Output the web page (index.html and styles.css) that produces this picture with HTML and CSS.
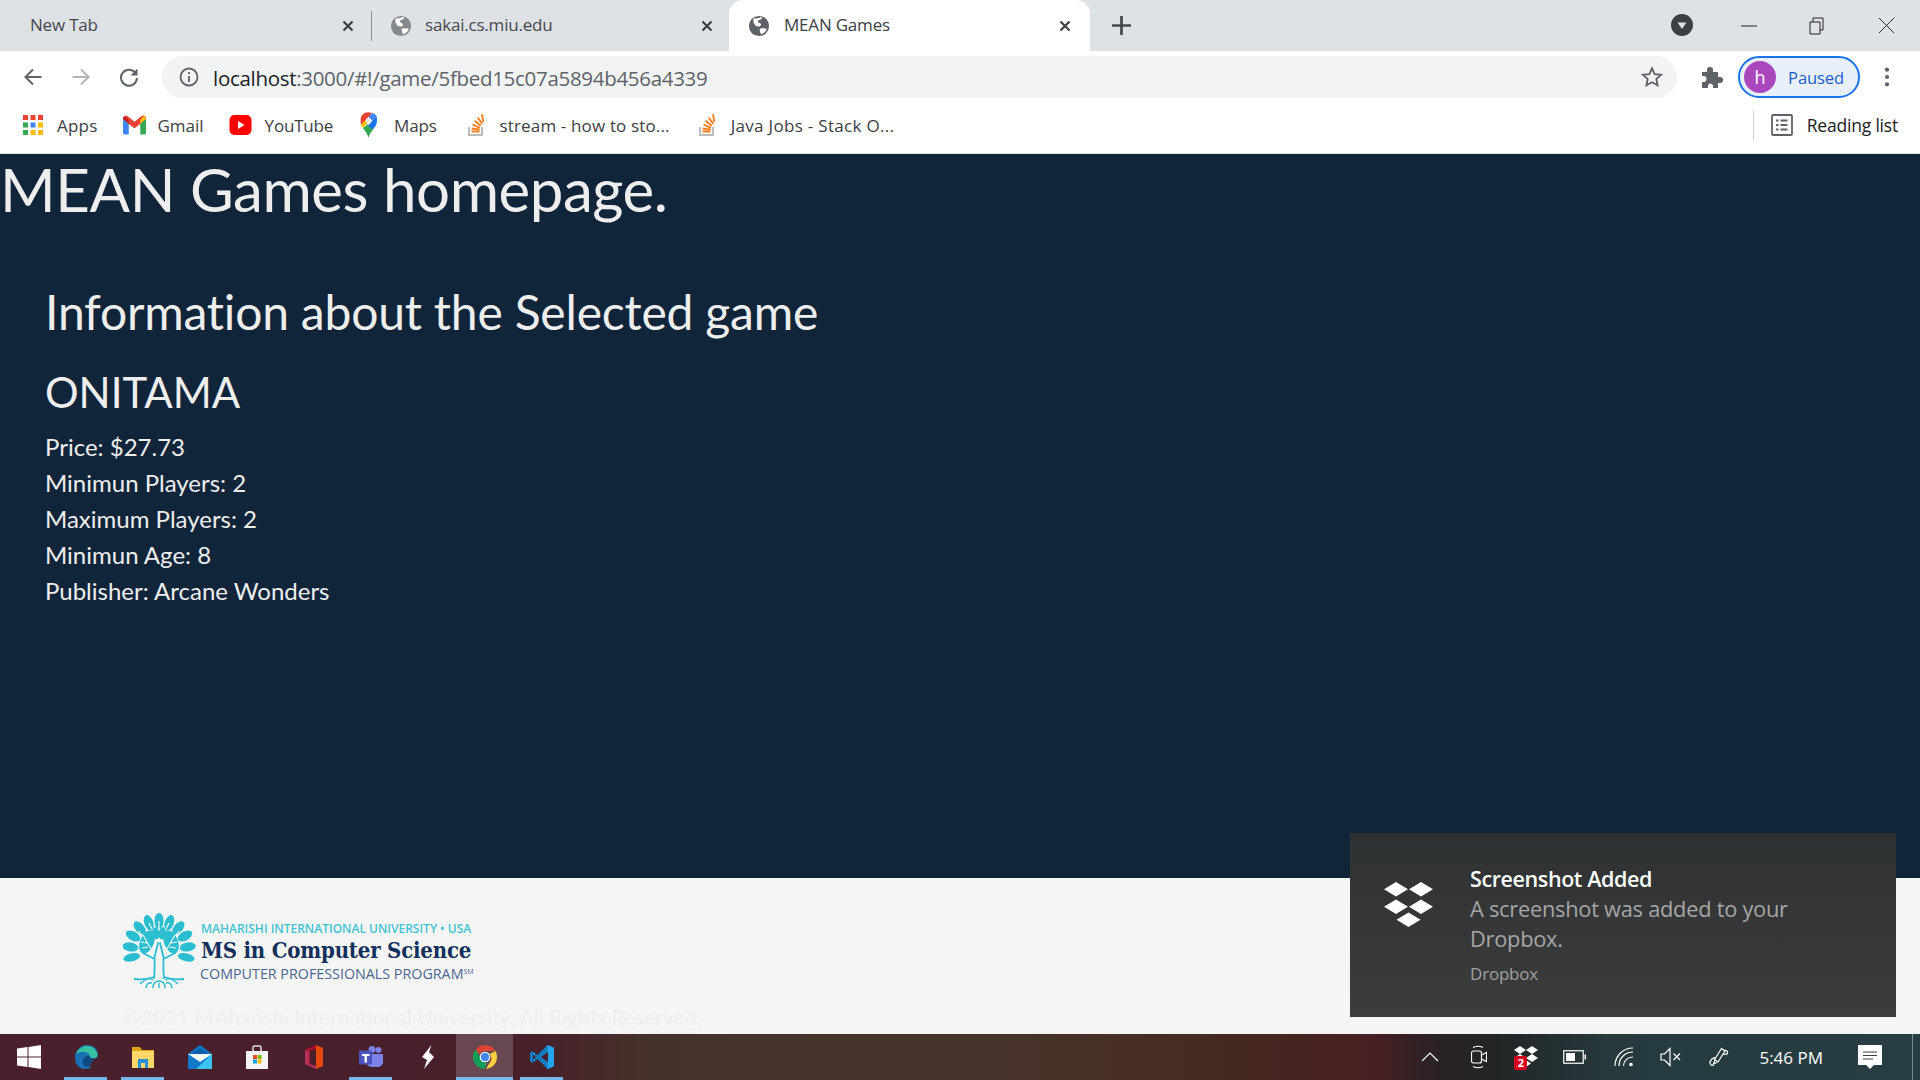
FILE: index.html
```html
<!DOCTYPE html>
<html>

<head>
  <meta charset="UTF-8">
  <meta name="viewport" content="width=device-width, initial-scale=1" />
  <title>MEAN Games</title>
  <link rel="stylesheet" href="styles.css">
</head>

<body>
  <!-- tab strip -->
  <div class="tabs">
    <div class="tab tab-first">
      <span class="tab-title">New Tab</span>
      <svg class="tab-close" viewBox="0 0 12 12"><path d="M1.5 1.5l9 9M10.5 1.5l-9 9" /></svg>
    </div>
    <div class="tab tab-second">
      <svg class="globe globe-dim" viewBox="0 0 24 24"><circle cx="12" cy="12" r="11" /><path class="globe-land" d="M6 3.500c3 .5 6 0 9-1.500 1 2-1 3-3 3.500-2 .5-1 3 1 3.500 2 .5 1.500 3-.5 3.500-3 .5-5-1-6-3.500-1-2-.5-4-.5-5.500zM13 15c3-1 5.500-.5 7.500 0-1 3-3 5-6 6-1.500-2-2-4-1.500-6z" /></svg>
      <span class="tab-title">sakai.cs.miu.edu</span>
      <svg class="tab-close" viewBox="0 0 12 12"><path d="M1.5 1.5l9 9M10.5 1.5l-9 9" /></svg>
    </div>
    <div class="tab tab-active">
      <svg class="globe" viewBox="0 0 24 24"><circle cx="12" cy="12" r="11" /><path class="globe-land" d="M6 3.500c3 .5 6 0 9-1.500 1 2-1 3-3 3.500-2 .5-1 3 1 3.500 2 .5 1.500 3-.5 3.500-3 .5-5-1-6-3.500-1-2-.5-4-.5-5.500zM13 15c3-1 5.500-.5 7.500 0-1 3-3 5-6 6-1.500-2-2-4-1.500-6z" /></svg>
      <span class="tab-title">MEAN Games</span>
      <svg class="tab-close" viewBox="0 0 12 12"><path d="M1.500 1.500l9 9M10.500 1.500l-9 9" /></svg>
    </div>
    <svg class="tab-new" viewBox="0 0 18 18"><path d="M9 0v18M0 9h18" /></svg>
    <div class="window-controls">
      <svg class="tab-search" viewBox="0 0 22 22"><circle cx="11" cy="11" r="11" /><path d="M6.500 8.500h9L11 15z" /></svg>
      <svg class="win-btn win-min" viewBox="0 0 16 16"><path d="M0 8h16" /></svg>
      <svg class="win-btn win-restore" viewBox="0 0 16 18"><path d="M1 5h10v12H1zM4 5V1h10v12h-3" /></svg>
      <svg class="win-btn win-close" viewBox="0 0 18 18"><path d="M1 1l16 16M17 1L1 17" /></svg>
    </div>
  </div>

  <!-- address bar -->
  <div class="toolbar">
    <svg class="nav-icon" viewBox="0 0 20 20"><path d="M18.500 10H3M10 2.500L2.500 10l7.500 7.500" /></svg>
    <svg class="nav-icon nav-off" viewBox="0 0 20 20"><path d="M1.500 10H17M10 2.500l7.500 7.500-7.500 7.500" /></svg>
    <svg class="nav-icon" viewBox="0 0 20 20"><path d="M16.800 6.500A8 8 0 1 0 18 11" /><path class="fill" d="M18.500 1.500v7h-7z" /></svg>
    <div class="omnibox">
      <svg class="info-icon" viewBox="0 0 20 20"><circle cx="10" cy="10" r="8.500" /><path d="M10 9v6M10 5v2" /></svg>
      <span class="url"><span class="url-host">localhost</span>:3000/#!/game/5fbed15c07a5894b456a4339</span>
      <svg class="star-icon" viewBox="0 0 24 24"><path d="M12 2.500l2.900 6.300 6.900.8-5.100 4.700 1.400 6.800-6.100-3.400-6.100 3.400 1.400-6.800L2.200 9.600l6.900-.8z" /></svg>
    </div>
    <svg class="puzzle-icon" viewBox="0 0 24 24"><path d="M3 7h5V5a3 3 0 0 1 6 0v2h5v5h2a3 3 0 0 1 0 6h-2v5h-5v-2a2.500 2.500 0 0 0-5 0v2H3v-6h1.500a3 3 0 0 0 0-6H3z" /></svg>
    <div class="profile">
      <span class="avatar">h</span>
      <span class="profile-label">Paused</span>
    </div>
    <svg class="menu-icon" viewBox="0 0 6 24"><circle cx="3" cy="4" r="2.300" /><circle cx="3" cy="12" r="2.300" /><circle cx="3" cy="20" r="2.300" /></svg>
  </div>

  <!-- bookmarks -->
  <div class="bookmarks">
    <div class="bookmark bm-apps">
      <svg class="bm-icon" viewBox="0 0 20 20">
        <rect x="0" y="0" width="5" height="5" fill="#ea4335" /><rect x="7.500" y="0" width="5" height="5" fill="#ea4335" /><rect x="15" y="0" width="5" height="5" fill="#ea4335" />
        <rect x="0" y="7.500" width="5" height="5" fill="#34a853" /><rect x="7.500" y="7.500" width="5" height="5" fill="#4285f4" /><rect x="15" y="7.500" width="5" height="5" fill="#fbbc04" />
        <rect x="0" y="15" width="5" height="5" fill="#34a853" /><rect x="7.500" y="15" width="5" height="5" fill="#fbbc04" /><rect x="15" y="15" width="5" height="5" fill="#fbbc04" />
      </svg>
      <span>Apps</span>
    </div>
    <div class="bookmark bm-gmail">
      <svg class="bm-icon bm-wide" viewBox="0 0 24 20">
        <path fill="#4285f4" d="M0 3v15a2 2 0 0 0 2 2h4V9z" />
        <path fill="#34a853" d="M24 3v15a2 2 0 0 1-2 2h-4V9z" />
        <path fill="#ea4335" d="M0 3.500C0 .5 3-.8 5 .8L12 6.500 19 .8c2-1.600 5-.3 5 2.700L18 9l-6 4.500L6 9z" />
        <path fill="#c5221f" d="M0 3.500L6 9V5L3.600 2.300C2 .5 0 1.500 0 3.500z" />
        <path fill="#fbbc04" d="M18 5l2.500-3.500C22 .5 24 1.500 24 3.500L18 9z" />
      </svg>
      <span>Gmail</span>
    </div>
    <div class="bookmark bm-youtube">
      <svg class="bm-icon bm-wide" viewBox="0 0 22 20"><rect width="22" height="20" rx="5" fill="#f00" /><path fill="#fff" d="M8.500 6l6.500 4-6.500 4z" /></svg>
      <span>YouTube</span>
    </div>
    <div class="bookmark bm-maps">
      <svg class="bm-map" viewBox="0 0 17 26">
        <path fill="#34a853" d="M3 16c2 3 4.500 5.500 5.500 10 1-4.500 3-6 4.500-8.500L8 12z" />
        <path fill="#fbbc04" d="M1 12.500c.5 1.300 1.200 2.400 2 3.500l6-7-4-4z" />
        <path fill="#1a73e8" d="M16.500 4L8 14l5 3.500c2-2.500 4-5 4-9 0-1.700-.1-3.200-.5-4.500z" />
        <path fill="#ea4335" d="M12 1C8 -.5 3 .5 1 5c-.5 2.500-.5 5 0 7.500L8.500 5z" />
        <path fill="#4285f4" d="M12 1l-3.500 4 4 4 4-5c-.8-1.300-2.500-2.500-4.500-3z" />
        <circle cx="8.500" cy="8.500" r="2.700" fill="#e8eaed" />
      </svg>
      <span>Maps</span>
    </div>
    <div class="bookmark bm-stream">
      <svg class="bm-so" viewBox="0 0 17 22">
        <path fill="#bcbbbb" d="M0 13h2v7h11v-7h2v9H0z" />
        <path fill="#f48024" d="M3.500 16.500h8v2h-8zM3.800 13.500l7.900 1.200-.3 1.900-7.900-1.200zM5 9.800l7.300 3.100-.8 1.800-7.300-3.100zM7.200 6l6.200 5-1.200 1.500-6.200-5zM10.500 3l4.600 6.400-1.600 1.200-4.600-6.500zM15 0l1.200 7.800-1.900.3-1.200-7.900z" />
      </svg>
      <span>stream - how to sto...</span>
    </div>
    <div class="bookmark bm-java">
      <svg class="bm-so" viewBox="0 0 17 22">
        <path fill="#bcbbbb" d="M0 13h2v7h11v-7h2v9H0z" />
        <path fill="#f48024" d="M3.500 16.500h8v2h-8zM3.800 13.500l7.900 1.200-.3 1.900-7.900-1.200zM5 9.800l7.300 3.100-.8 1.800-7.300-3.100zM7.200 6l6.200 5-1.200 1.500-6.200-5zM10.500 3l4.600 6.400-1.600 1.200-4.600-6.500zM15 0l1.200 7.800-1.900.3-1.200-7.900z" />
      </svg>
      <span>Java Jobs - Stack O...</span>
    </div>
    <div class="reading-list">
      <svg class="reading-icon" viewBox="0 0 22 22"><rect x="1" y="1" width="20" height="20" rx="1" /><path d="M9.500 6.500h7M9.500 11h7M9.500 15.500h7M5 6.500h2.500M5 11h2.500M5 15.500h2.500" /></svg>
      <span>Reading list</span>
    </div>
  </div>

  <!-- page -->
  <div class="page">
    <main class="content">
      <h1 class="page-title">MEAN Games homepage.</h1>
      <section class="game">
        <h2 class="game-heading">Information about the Selected game</h2>
        <h3 class="game-name">ONITAMA</h3>
        <ul class="game-info">
          <li>Price: $27.73</li>
          <li>Minimun Players: 2</li>
          <li>Maximum Players: 2</li>
          <li>Minimun Age: 8</li>
          <li>Publisher: Arcane Wonders</li>
        </ul>
      </section>
    </main>

    <footer class="footer">
      <div class="logo">
        <svg class="logo-tree" viewBox="0 0 73 76">
          <g class="tree-leaves">
            <ellipse cx="36" cy="8" rx="4.500" ry="8" />
            <ellipse cx="36" cy="8" rx="4.500" ry="8" transform="rotate(20 36 38)" />
            <ellipse cx="36" cy="8" rx="4.500" ry="8" transform="rotate(-20 36 38)" />
            <ellipse cx="36" cy="8" rx="4.500" ry="8" transform="rotate(40 36 38)" />
            <ellipse cx="36" cy="8" rx="4.500" ry="8" transform="rotate(-40 36 38)" />
            <ellipse cx="36" cy="8" rx="4.500" ry="8" transform="rotate(60 36 38)" />
            <ellipse cx="36" cy="8" rx="4.500" ry="8" transform="rotate(-60 36 38)" />
            <ellipse cx="36" cy="9" rx="4.500" ry="8" transform="rotate(82 36 38)" />
            <ellipse cx="36" cy="9" rx="4.500" ry="8" transform="rotate(-82 36 38)" />
            <ellipse cx="36" cy="10" rx="4" ry="8.500" transform="rotate(103 36 38)" />
            <ellipse cx="36" cy="10" rx="4" ry="8.500" transform="rotate(-103 36 38)" />
            <ellipse cx="36" cy="20" rx="3.500" ry="6" transform="rotate(10 36 38)" />
            <ellipse cx="36" cy="20" rx="3.500" ry="6" transform="rotate(-10 36 38)" />
            <ellipse cx="24" cy="29" rx="7" ry="12" transform="rotate(22 24 29)" />
            <ellipse cx="48" cy="29" rx="7" ry="12" transform="rotate(-22 48 29)" />
          </g>
          <path class="tree-veins" d="M20 22l8 14M52 22l-8 14M18 29l6 1M19 35l6-1M54 29l-6 1M53 35l-6-1M36 8v8M26 10l3 6M46 10l-3 6M15 18l4 4M57 18l-4 4" />
          <path class="tree-trunk" d="M31.500 44c0 7 .5 14-.5 21M40.500 44c0 7-.5 14 .5 21M31.500 46L20 40M40.500 46L52 40M31.500 44L35 30M40.500 44L37 30" />
          <path class="tree-roots" d="M11 66c8 1 14 0 20-2M61 66c-8 1-14 0-20-2" />
          <path class="tree-roots-fine" d="M17 71c5-5 10-6 13-4M55 71c-5-5-10-6-13-4M23 75c0-4 3-6 6-5M49 75c0-4-3-6-6-5M30 75c0-5 3-7 6-7s6 2 6 7M36 70v5" />
        </svg>
        <div class="logo-text">
          <div class="logo-uni">MAHARISHI INTERNATIONAL UNIVERSITY • USA</div>
          <div class="logo-ms">MS in Computer Science</div>
          <div class="logo-cpp">COMPUTER PROFESSIONALS PROGRAM<sup>SM</sup></div>
        </div>
      </div>
      <p class="copyright">©2021 MAharishi International University. All Rights Reserved.</p>
    </footer>
  </div>

  <!-- windows taskbar -->
  <div class="taskbar">
    <div class="task">
      <svg class="task-icon" viewBox="0 0 24 24"><path fill="#fff" d="M0 3.500l10.500-1.400V11.500H0zM11.500 2L24 0v11.500H11.500zM0 12.500h10.500v9.400L0 20.500zM11.500 12.500H24V24l-12.500-2z" /></svg>
    </div>
    <div class="task task-open">
      <svg class="task-icon" viewBox="0 0 24 24">
        <path fill="#1b6fb3" d="M1 13C1 6 6 0 13 0c6 0 11 4 11 10 0 3-3 4-6 4H9c0 5 4 8 9 7.500-1.500 1.700-4 2.500-7 2.500-6 0-10-5-10-11z" />
        <path fill="#35c1a1" d="M2 9C4 4 8 1 13 1c5 0 10 3 10.500 9 .2 2-2 3.500-5 3.500-3 0-2-3-4-5S5 6 2 9z" />
        <path fill="#0c4a80" d="M9 15c1-3 3-4 5-4 1 0 2 .5 2 2h4c-1 5-4 8-8 9-2-1-4-4-3-7z" />
      </svg>
    </div>
    <div class="task task-open">
      <svg class="task-icon" viewBox="0 0 24 24">
        <path fill="#e0a514" d="M1 2h8l2 3h12v4H1z" />
        <path fill="#ffd768" d="M1 6h22v17H1z" />
        <path fill="#2a8fd8" d="M7 14h10v9h-3v-5h-4v5H7z" />
      </svg>
    </div>
    <div class="task">
      <svg class="task-icon" viewBox="0 0 24 24">
        <path fill="#0f78c8" d="M0 9L12 0l12 9v15H0z" />
        <path fill="#3cc4f5" d="M24 9v15H8z" />
        <path fill="#fff" d="M0 9h24L12 17z" opacity=".95" />
        <path fill="#0f62a8" d="M3 9l9-6.500L21 9z" />
      </svg>
    </div>
    <div class="task">
      <svg class="task-icon" viewBox="0 0 24 24">
        <path fill="none" stroke="#ddd" stroke-width="1.500" d="M8 6V2.500A1.500 1.500 0 0 1 9.500 1h5A1.500 1.500 0 0 1 16 2.500V6" />
        <path fill="#f5f5f5" d="M1 6h22v18H1z" />
        <rect x="8" y="10" width="4" height="4" fill="#f25022" /><rect x="12.500" y="10" width="4" height="4" fill="#7fba00" />
        <rect x="8" y="14.500" width="4" height="4" fill="#00a4ef" /><rect x="12.500" y="14.500" width="4" height="4" fill="#ffb900" />
      </svg>
    </div>
    <div class="task">
      <svg class="task-icon task-office" viewBox="0 0 18 24">
        <path fill="#e64a0a" d="M18 3v18l-7 3V0z" />
        <path fill="#a3142a" d="M11 0L1 4v15l4 1V6l6-2z" />
        <path fill="#b8305a" d="M0 5v14l11 5v-3l-7-2V6z" />
      </svg>
    </div>
    <div class="task task-open">
      <svg class="task-icon" viewBox="0 0 24 24">
        <circle cx="19.500" cy="5" r="3" fill="#7b83eb" />
        <circle cx="13" cy="4.500" r="3.500" fill="#7b83eb" />
        <path fill="#7b83eb" d="M7 9h17v8a5 5 0 0 1-5 5h-6a6 6 0 0 1-6-6z" />
        <rect y="5.500" width="13" height="14" rx="1" fill="#4b53bc" />
        <path fill="#fff" d="M3 9h7.500v2H8v6.500H5.500V11H3z" />
      </svg>
    </div>
    <div class="task">
      <svg class="task-icon task-bolt" viewBox="0 0 12 24"><path fill="#fff" d="M9.500 0L7 7l5 5-10 12 3-9-5-3z" /></svg>
    </div>
    <div class="task task-open task-active">
      <svg class="task-icon" viewBox="0 0 24 24">
        <path fill="#db4437" d="M12 0a12 12 0 0 1 10.400 6H12a6 6 0 0 0-5.500 3.600L2.700 4.400A12 12 0 0 1 12 0z" />
        <path fill="#ffcd40" d="M22.400 6A12 12 0 0 1 12.900 24l4.300-7A6 6 0 0 0 16.700 9z" />
        <path fill="#0f9d58" d="M2.700 4.400l4.600 7.900A6 6 0 0 0 14 17.700L11.500 24A12 12 0 0 1 2.700 4.400z" />
        <circle cx="12" cy="12" r="5.300" fill="#fff" />
        <circle cx="12" cy="12" r="4.200" fill="#4285f4" />
      </svg>
    </div>
    <div class="task task-open">
      <svg class="task-icon" viewBox="0 0 24 24">
        <path fill="#0e7ac0" d="M17.500 0L7.500 10 2.700 6.200 0 7.500v9l2.700 1.300 4.800-3.800 10 10 6.500-2.700V2.700z" />
        <path fill="#23a5ec" d="M17.500 0L24 2.700v18.600L17.500 24z" />
        <path fill="#4a1f2b" d="M18 7l-7 5 7 5z" />
        <path fill="#4a1f2b" d="M3 9.500v5l3-2.500z" />
      </svg>
    </div>

    <div class="tray">
      <svg class="tray-icon tray-chevron" viewBox="0 0 18 10"><path d="M1 9l8-8 8 8" /></svg>
      <svg class="tray-icon tray-meet" viewBox="0 0 16 24">
        <rect x=".5" y="6" width="10" height="12" rx="2" />
        <path d="M10.500 10l5-2.500v9l-5-2.500M2 2.500c3-1.500 7-1.500 10 0M2 21.500c3 1.500 7 1.500 10 0" />
      </svg>
      <div class="tray-dropbox">
        <svg class="tray-dropbox-icon" viewBox="0 0 24 22"><path fill="#fff" d="M6 0l6 4-6 4-6-4zM18 0l6 4-6 4-6-4zM6 8l6 4-6 4-6-4zM18 8l6 4-6 4-6-4zM12 14l5 3.500-5 3.500-5-3.500z" /></svg>
        <span class="tray-badge">2</span>
      </div>
      <svg class="tray-icon tray-battery" viewBox="0 0 23 14"><rect x=".75" y=".75" width="19.500" height="12.500" /><path class="fill" d="M3 3h9v8H3zM21.500 4.500H23v5h-1.500z" /></svg>
      <svg class="tray-icon tray-wifi" viewBox="0 0 20 20"><path d="M1 19C1 9 9 1 19 1M5 19c0-8 6-14 14-14M9.500 19c0-5 4-9 9.500-9" /><circle class="fill" cx="17" cy="17.500" r="1.800" /></svg>
      <svg class="tray-icon tray-volume" viewBox="0 0 21 20"><path d="M1 7h3.500L10 1.500v17L4.500 13H1zM13.500 6.500l6.500 6.500M20 6.500L13.500 13" /></svg>
      <svg class="tray-icon tray-pen" viewBox="0 0 20 20"><path d="M12.500 1.500l3.500 2.500-7 11-3.500-2.500zM6 13l-1.500 4 3.500-1.500M15 3c2 0 4 1 3.500 3-.5 1.500-3 1.500-4.500 1M7 11c-3-1-6 2-6 5 0 2 2 3 4 2" /></svg>
      <span class="tray-clock">5:46 PM</span>
      <svg class="tray-notes" viewBox="0 0 24 24"><path fill="#fff" d="M0 0h24v20h-8l-4 4-4-4H0z" /><path stroke="#3a3f42" stroke-width="1.200" d="M5 7h14M5 10.500h14M5 14h10" /></svg>
      <span class="tray-desktop"></span>
    </div>
  </div>

  <!-- dropbox toast -->
  <div class="toast">
    <svg class="toast-icon" viewBox="0 0 49 50" preserveAspectRatio="none"><path fill="#fff" d="M12 0l12 8-12 8-12-8zM37 0l12 8-12 8-12-8zM12 19.500l12 8-12 8-12-8zM37 19.500l12 8-12 8-12-8zM24.500 34l12 8-12 8-12-8z" /></svg>
    <div class="toast-text">
      <div class="toast-title">Screenshot Added</div>
      <div class="toast-body">A screenshot was added to your Dropbox.</div>
      <div class="toast-source">Dropbox</div>
    </div>
  </div>
</body>

</html>
```
FILE: styles.css
```css
:root {
  --color-strip: #dee1e6;
  --color-page: #10253a;
  --color-footer: #f5f5f5;
  --color-icon: #5f6368;
  --ui-font: "Open Sans", "Noto Sans", sans-serif;
}

* {
  margin: 0;
  padding: 0;
  box-sizing: border-box;
}

html,
body {
  height: 1080px;
  overflow: hidden;
}

body {
  position: relative;
  display: flex;
  flex-direction: column;
  font-family: var(--ui-font);
  color: #3c4043;
  background: #fff;
}

svg {
  display: block;
  flex-shrink: 0;
}

/* tab strip */
.tabs {
  height: 51px;
  flex-shrink: 0;
  display: flex;
  align-items: center;
  background: var(--color-strip);
}

.tab {
  height: 51px;
  display: flex;
  align-items: center;
  font-size: 17px;
  letter-spacing: -.2px;
  color: #45484d;
}

.tab-first {
  position: relative;
  width: 372px;
  padding: 0 18px 0 30px;
}

.tab-first::after {
  content: "";
  position: absolute;
  right: 0;
  top: 11px;
  height: 30px;
  width: 1px;
  background: #8d8f93;
}

.tab-second {
  width: 357px;
  padding: 0 16px 0 18px;
}

.tab-second .globe {
  margin-right: 13px;
}

.tab-active {
  width: 361px;
  padding: 0 19px 0 19px;
  background: #fff;
  border-radius: 14px 14px 0 0;
  color: #3c4043;
}

.tab-title {
  flex: 1;
  padding-bottom: 2px;
  white-space: nowrap;
}

.globe {
  width: 22px;
  height: 22px;
  margin-right: 14px;
  fill: #5f6368;
}

.globe-dim {
  fill: #85888d;
}

.globe-land {
  fill: #fff;
}

.tab-close {
  width: 12px;
  height: 12px;
  fill: none;
  stroke: #3c4043;
  stroke-width: 2.200;
}

.tab-new {
  width: 19px;
  height: 19px;
  margin-left: 22px;
  margin-bottom: 1px;
  fill: none;
  stroke: #45484d;
  stroke-width: 2.600;
}

.window-controls {
  margin-left: auto;
  display: flex;
  align-items: center;
}

.tab-search {
  width: 22px;
  height: 22px;
  margin-right: 48px;
  margin-bottom: 2px;
  fill: #3c4043;
}

.tab-search path {
  fill: #dee1e6;
}

.win-btn {
  fill: none;
  stroke: #222;
  stroke-width: 1;
}

.win-min {
  width: 16px;
  height: 16px;
  margin-right: 52px;
}

.win-restore {
  width: 16px;
  height: 18px;
  margin-right: 53px;
}

.win-close {
  width: 17px;
  height: 17px;
  margin-right: 25px;
}

/* address bar */
.toolbar {
  height: 51px;
  flex-shrink: 0;
  display: flex;
  align-items: center;
  padding: 0 30px 0 23px;
  background: #fff;
}

.nav-icon {
  width: 20px;
  height: 20px;
  margin-right: 28px;
  fill: none;
  stroke: #5f6368;
  stroke-width: 2;
}

.nav-icon:nth-child(3) {
  margin-right: 23px;
}

.nav-icon .fill {
  fill: #5f6368;
  stroke: none;
}

.nav-off {
  stroke: #b4b6b9;
}

.omnibox {
  width: 1516px;
  height: 42px;
  display: flex;
  align-items: center;
  padding: 0 14px 0 17px;
  border-radius: 21px;
  background: #f1f3f4;
}

.info-icon {
  width: 20px;
  height: 20px;
  margin-right: 14px;
  fill: none;
  stroke: #5f6368;
  stroke-width: 1.800;
}

.url {
  flex: 1;
  padding-top: 3px;
  font-size: 20.500px;
  letter-spacing: -.3px;
  color: #5f6368;
  white-space: nowrap;
}

.url-host {
  color: #202124;
}

.star-icon {
  width: 22px;
  height: 22px;
  fill: none;
  stroke: #5f6368;
  stroke-width: 2;
}

.puzzle-icon {
  width: 24px;
  height: 24px;
  margin-left: 22px;
  fill: #5f6368;
}

.profile {
  width: 122px;
  height: 42px;
  margin-left: 15px;
  display: flex;
  align-items: center;
  padding-left: 4px;
  border: 2px solid #1a73e8;
  border-radius: 21px;
  background: #e9f0fb;
}

.avatar {
  width: 32px;
  height: 32px;
  margin-right: 12px;
  display: flex;
  align-items: center;
  justify-content: center;
  border-radius: 50%;
  background: #ab47bc;
  color: #fff;
  font-size: 18px;
}

.profile-label {
  padding-top: 2px;
  font-size: 16.500px;
  letter-spacing: -.1px;
  color: #1a5fc8;
}

.menu-icon {
  width: 6px;
  height: 22px;
  margin-left: 24px;
  fill: #5f6368;
}

/* bookmarks */
.bookmarks {
  height: 51px;
  flex-shrink: 0;
  display: flex;
  align-items: center;
  padding: 0 22px 5px 23px;
  background: #fff;
  font-size: 17px;
  letter-spacing: -.2px;
  color: #3c4043;
}

.bookmark {
  display: flex;
  align-items: center;
  gap: 13px;
  white-space: nowrap;
}

.bm-apps {
  gap: 14px;
  margin-right: 26px;
  letter-spacing: .2px;
}

.bm-icon {
  width: 20px;
  height: 20px;
}

.bm-wide {
  width: 23px;
}

.bm-gmail {
  gap: 11px;
  margin-right: 25px;
  letter-spacing: 0;
}

.bm-youtube {
  margin-right: 27px;
}

.bm-map {
  width: 17px;
  height: 26px;
}

.bm-maps {
  gap: 17px;
  margin-right: 31px;
}

.bm-so {
  width: 17px;
  height: 22px;
}

.bm-stream {
  gap: 15px;
  margin-right: 29px;
  letter-spacing: .15px;
}

.bm-java {
  gap: 15px;
  letter-spacing: .3px;
}

.reading-list {
  margin-left: auto;
  height: 30px;
  display: flex;
  align-items: center;
  gap: 14px;
  padding-left: 17px;
  border-left: 1px solid #d0d2d5;
  font-size: 17.500px;
  color: #202124;
}

.reading-icon {
  width: 22px;
  height: 22px;
  fill: none;
  stroke: #5f6368;
  stroke-width: 1.800;
}

/* page */
.page {
  flex: 1;
  display: flex;
  flex-direction: column;
  font-family: Lato, sans-serif;
}

.content {
  flex: 1;
  background: var(--color-page);
  color: #eeeeee;
  border-top: 1px solid #dfe1e5;
}

.page-title {
  font-size: 60px;
  font-weight: 400;
  letter-spacing: -.45px;
  line-height: 71px;
}

.game {
  padding: 58px 45px 0;
}

.game-heading {
  font-size: 48px;
  font-weight: 400;
  letter-spacing: -.2px;
  line-height: 58px;
  margin-bottom: 27px;
}

.game-name {
  font-size: 42px;
  font-weight: 400;
  line-height: 48px;
  margin-bottom: 13px;
}

.game-info {
  list-style: none;
  font-size: 24px;
  line-height: 36px;
}

.footer {
  height: 156px;
  flex-shrink: 0;
  background: var(--color-footer);
  padding: 35px 123px 0;
}

.logo {
  display: flex;
  align-items: center;
  gap: 5px;
}

.logo-tree {
  width: 73px;
  height: 76px;
}

.tree-leaves {
  fill: #2bbdd0;
}

.tree-veins {
  fill: none;
  stroke: #f5f5f5;
  stroke-width: 1.200;
}

.tree-trunk,
.tree-roots,
.tree-roots-fine {
  fill: none;
  stroke: #2bbdd0;
  stroke-width: 1.800;
}

.tree-trunk {
  stroke-linecap: round;
}

.tree-roots-fine {
  stroke-width: 1.400;
}

.logo-text {
  margin-top: 2px;
  white-space: nowrap;
}

.logo-uni {
  font-family: "Open Sans", sans-serif;
  font-size: 12px;
  font-weight: 600;
  color: #43c3d2;
  line-height: 15px;
}

.logo-ms {
  font-family: "DejaVu Serif", serif;
  font-size: 22px;
  font-weight: 700;
  font-stretch: condensed;
  letter-spacing: -.2px;
  color: #13305c;
  line-height: 28px;
}

.logo-cpp {
  font-family: "Open Sans", sans-serif;
  font-size: 14.300px;
  color: #4d6590;
  line-height: 20px;
  margin-left: -1px;
}

.logo-cpp sup {
  font-size: 7px;
  vertical-align: 5px;
  line-height: 0;
}

.copyright {
  margin-top: 15px;
  font-size: 21px;
  line-height: 26px;
  color: #eeeeee;
}

/* windows taskbar */
.taskbar {
  height: 46px;
  flex-shrink: 0;
  display: flex;
  align-items: stretch;
  color: #fff;
  background: linear-gradient(90deg, #4a202c 0%, #47202a 28%, #45322a 34%, #47342a 52%, #45281f 65%, #461f22 71.500%, #2a2226 75%, #222526 78%, #263a3e 84%, #273e44 100%);
}

.task {
  position: relative;
  width: 57px;
  display: flex;
  align-items: center;
  justify-content: center;
}

.task-open::after {
  content: "";
  position: absolute;
  left: 7px;
  right: 7px;
  bottom: 0;
  height: 3px;
  background: #76b9ed;
}

.task-active {
  background: rgba(255, 255, 255, .18);
}

.task-active::after {
  left: 0;
  right: 0;
}

.task-icon {
  width: 24px;
  height: 24px;
}

.task-office {
  width: 18px;
}

.task-bolt {
  width: 12px;
}

.tray {
  flex: 1;
  display: flex;
  align-items: center;
  justify-content: flex-end;
}

.tray-icon {
  fill: none;
  stroke: #fff;
  stroke-width: 1.200;
}

.tray-icon .fill {
  fill: #fff;
  stroke: none;
}

.tray-chevron {
  width: 18px;
  height: 10px;
  margin-right: 32px;
}

.tray-meet {
  width: 16px;
  height: 24px;
  margin-right: 27px;
}

.tray-dropbox {
  position: relative;
  width: 24px;
  height: 22px;
  margin-right: 25px;
}

.tray-dropbox-icon {
  width: 24px;
  height: 22px;
}

.tray-badge {
  position: absolute;
  left: 0;
  top: 10px;
  width: 13px;
  height: 14px;
  border-radius: 2px;
  background: #d8001f;
  font-size: 11px;
  font-weight: 700;
  line-height: 14px;
  text-align: center;
}

.tray-battery {
  width: 23px;
  height: 14px;
  margin-right: 28px;
}

.tray-wifi {
  width: 20px;
  height: 20px;
  margin-right: 26px;
}

.tray-volume {
  width: 21px;
  height: 20px;
  margin-right: 28px;
}

.tray-pen {
  width: 20px;
  height: 20px;
  margin-right: 30px;
}

.tray-clock {
  font-size: 17px;
  margin-right: 35px;
  white-space: nowrap;
}

.tray-notes {
  width: 24px;
  height: 24px;
  margin-right: 30px;
}

.tray-desktop {
  width: 1px;
  height: 46px;
  margin-right: 7px;
  background: #7d8a8e;
}

/* dropbox toast */
.toast {
  position: absolute;
  left: 1350px;
  top: 833px;
  width: 546px;
  height: 184px;
  display: flex;
  padding: 32px 0 0 34px;
  background: linear-gradient(180deg, #2e3133, #3c3c3c);
  font-family: "Open Sans", sans-serif;
}

.toast-icon {
  width: 49px;
  height: 45px;
  margin-top: 17px;
  margin-right: 37px;
}

.toast-text {
  width: 350px;
}

.toast-title {
  font-size: 21.500px;
  font-weight: 600;
  letter-spacing: -.4px;
  line-height: 28px;
  color: #fff;
}

.toast-body {
  margin-top: 1px;
  font-size: 21.800px;
  letter-spacing: -.25px;
  line-height: 30px;
  color: #a6a6a6;
}

.toast-source {
  margin-top: 7px;
  font-size: 17px;
  letter-spacing: -.2px;
  line-height: 26px;
  color: #a0a0a0;
}
```
